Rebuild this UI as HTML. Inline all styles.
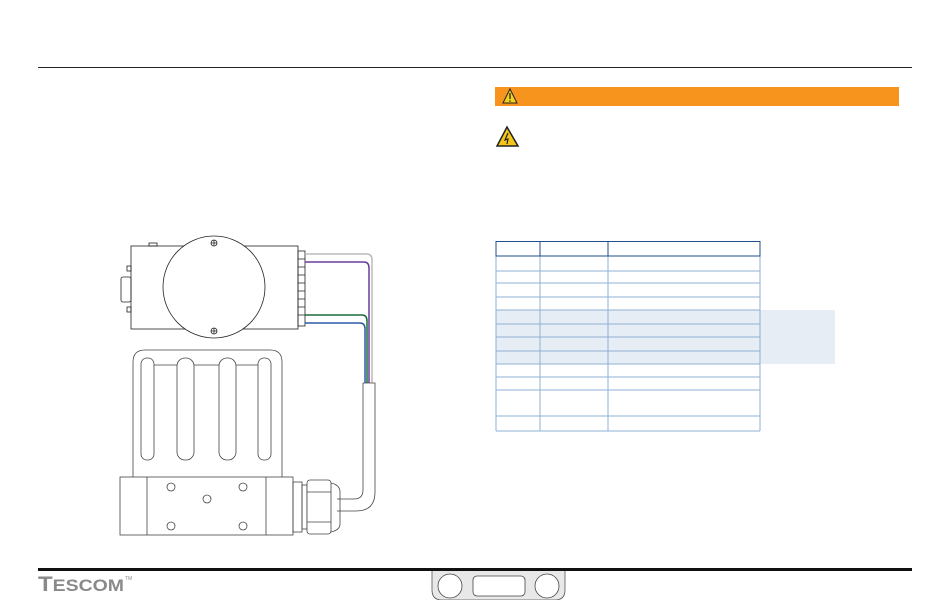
<!DOCTYPE html>
<html><head><style>
body{margin:0;width:950px;height:600px;background:#fff;position:relative;overflow:hidden;font-family:"Liberation Sans",sans-serif}
.a{position:absolute}
</style></head><body>
<div class="a" style="left:38px;top:67px;width:874px;height:1px;background:#222"></div>
<div class="a" style="left:495px;top:87px;width:404px;height:19px;background:#f7941d"></div>
<svg class="a" style="left:0;top:0" width="950" height="600">
<polygon points="510,89 503,103 517,103" fill="#f5d21a" stroke="#222" stroke-width="1"/>
<line x1="510" y1="93" x2="510" y2="99" stroke="#222" stroke-width="1.3"/>
<circle cx="510" cy="101" r="0.8" fill="#222"/>
<polygon points="507,127 497,146 518,146" fill="#f5c518" stroke="#222" stroke-width="1.5"/>
<path d="M508,133 L505,140 L508,139 L507,144" stroke="#222" fill="none" stroke-width="1.2"/>
<g stroke="#8fb0d4" stroke-width="1">
<rect x="760" y="310" width="75" height="54" fill="#e6edf5" stroke="none"/>
<rect x="496" y="310" width="264" height="54" fill="#e6edf5" stroke="none"/>
<line x1="496" y1="271" x2="760" y2="271"/><line x1="496" y1="283" x2="760" y2="283"/>
<line x1="496" y1="297" x2="760" y2="297"/><line x1="496" y1="310" x2="760" y2="310"/>
<line x1="496" y1="324" x2="760" y2="324"/><line x1="496" y1="337" x2="760" y2="337"/>
<line x1="496" y1="351" x2="760" y2="351"/><line x1="496" y1="364" x2="760" y2="364"/>
<line x1="496" y1="377" x2="760" y2="377"/><line x1="496" y1="390" x2="760" y2="390"/>
<line x1="496" y1="416" x2="760" y2="416"/><line x1="496" y1="431" x2="760" y2="431"/>
<line x1="496" y1="256" x2="496" y2="431"/><line x1="540" y1="256" x2="540" y2="431"/>
<line x1="608" y1="256" x2="608" y2="431"/><line x1="760" y1="256" x2="760" y2="431"/>
</g>
<rect x="496" y="241.5" width="264" height="14.5" fill="none" stroke="#1f4e8c" stroke-width="1"/>
<line x1="540" y1="241" x2="540" y2="256" stroke="#1f4e8c"/><line x1="608" y1="241" x2="608" y2="256" stroke="#1f4e8c"/>
<g fill="none" stroke="#222" stroke-width="0.8">
<rect x="131" y="246" width="167" height="83" fill="#fff"/>
<rect x="149" y="243" width="8" height="3"/>
<rect x="121" y="277" width="10" height="25" rx="2"/>
<rect x="127" y="266" width="4" height="5"/><rect x="127" y="307" width="4" height="5"/>
<circle cx="214" cy="287" r="51" fill="#fff"/>
<circle cx="214" cy="243" r="3"/><path d="M211,243h6M214,240v6"/>
<circle cx="214" cy="331" r="3"/><path d="M211,331h6M214,328v6"/>
<rect x="298" y="251" width="7" height="75"/>
<path d="M298,259h7M298,267h7M298,275h7M298,283h7M298,291h7M298,299h7M298,307h7M298,315h7"/>
</g>
<g fill="none" stroke-width="1.5">
<path d="M305,254 H367 Q372,254 372,260 V383" stroke="#bbb"/>
<path d="M305,262 H364 Q369,262 369,268 V383" stroke="#6a3d9a"/>
<path d="M305,315 H362 Q367,315 367,321 V383" stroke="#1a6b3a"/>
<path d="M305,323 H360 Q365,323 365,329 V383" stroke="#2a5aa8"/>
</g>
<g fill="none" stroke="#444" stroke-width="0.8">
<path d="M363,383 H375 V492 Q375,511 356,511 H337 M363,383 V490 Q363,499 354,499 H337"/>
<path d="M133,478 V362 Q133,350 145,350 H270 Q282,350 282,362 V478"/>
<rect x="141" y="358" width="13" height="102" rx="6"/>
<rect x="177" y="358" width="17" height="102" rx="8"/>
<rect x="219" y="358" width="17" height="102" rx="8"/>
<rect x="258" y="358" width="13" height="102" rx="6"/>
<path d="M154,365H177M194,365H219M236,365H258"/>
<rect x="120" y="477" width="173" height="58" fill="#fff"/>
<path d="M147,477V535M266,477V535"/>
<circle cx="171" cy="487" r="4"/><circle cx="243" cy="487" r="4"/><circle cx="207" cy="499" r="4"/>
<circle cx="171" cy="526" r="4"/><circle cx="243" cy="526" r="4"/>
<rect x="293" y="482" width="9" height="50"/>
<rect x="302" y="485" width="5" height="44"/>
<rect x="307" y="480" width="24" height="54" rx="3" fill="#fff"/>
<path d="M307,492H331M307,522H331"/>
<path d="M331,483 Q340,485 340,492 V524 Q340,530 331,532"/>
</g>
<rect x="38" y="568" width="874" height="3" fill="#111"/>
<path d="M432,571 V590 Q432,600 442,600 H555 Q565,600 565,590 V571" fill="#e8e8e8" stroke="#555" stroke-width="0.8"/>
<circle cx="450" cy="586" r="12" fill="#fff" stroke="#444" stroke-width="0.8"/>
<circle cx="547" cy="586" r="12" fill="#fff" stroke="#444" stroke-width="0.8"/>
<rect x="473" y="576" width="52" height="20" rx="4" fill="#fff" stroke="#444" stroke-width="0.8"/>
<text x="38" y="591" font-family="Liberation Sans" font-weight="bold" fill="#8a8a8a" font-size="21" textLength="86" lengthAdjust="spacingAndGlyphs">T<tspan font-size="17">ESCOM</tspan></text>
<text x="125" y="580" font-family="Liberation Sans" fill="#8a8a8a" font-size="5">TM</text>
</svg>
</body></html>
